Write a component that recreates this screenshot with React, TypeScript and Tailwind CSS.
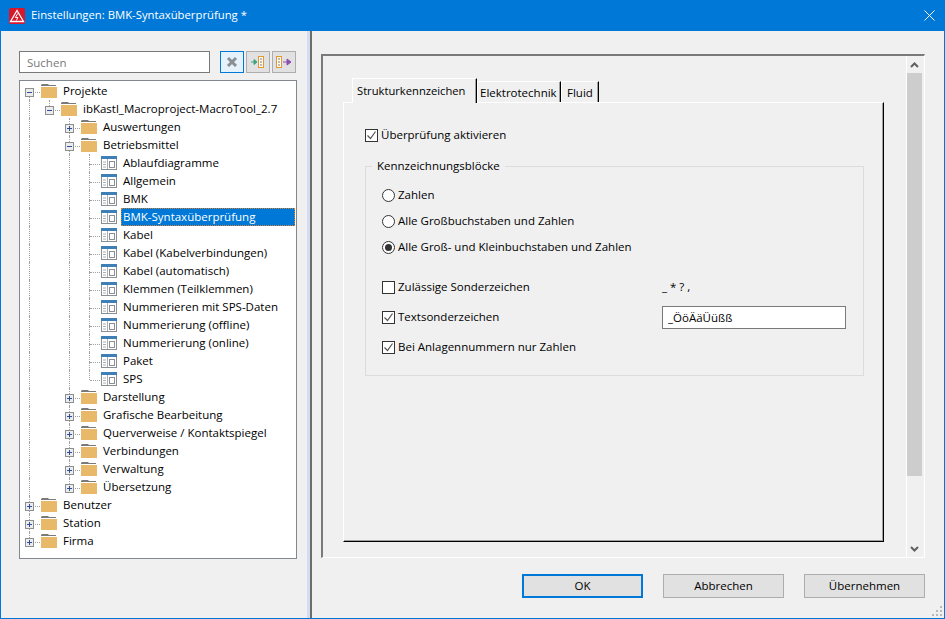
type TreeRow = { label: string; depth: number; kind: "open" | "closed" | "leaf"; selected?: boolean };

const rows: TreeRow[] = [
  { label: "Projekte", depth: 0, kind: "open" },
  { label: "ibKastl_Macroproject-MacroTool_2.7", depth: 1, kind: "open" },
  { label: "Auswertungen", depth: 2, kind: "closed" },
  { label: "Betriebsmittel", depth: 2, kind: "open" },
  { label: "Ablaufdiagramme", depth: 3, kind: "leaf" },
  { label: "Allgemein", depth: 3, kind: "leaf" },
  { label: "BMK", depth: 3, kind: "leaf" },
  { label: "BMK-Syntaxüberprüfung", depth: 3, kind: "leaf", selected: true },
  { label: "Kabel", depth: 3, kind: "leaf" },
  { label: "Kabel (Kabelverbindungen)", depth: 3, kind: "leaf" },
  { label: "Kabel (automatisch)", depth: 3, kind: "leaf" },
  { label: "Klemmen (Teilklemmen)", depth: 3, kind: "leaf" },
  { label: "Nummerieren mit SPS-Daten", depth: 3, kind: "leaf" },
  { label: "Nummerierung (offline)", depth: 3, kind: "leaf" },
  { label: "Nummerierung (online)", depth: 3, kind: "leaf" },
  { label: "Paket", depth: 3, kind: "leaf" },
  { label: "SPS", depth: 3, kind: "leaf" },
  { label: "Darstellung", depth: 2, kind: "closed" },
  { label: "Grafische Bearbeitung", depth: 2, kind: "closed" },
  { label: "Querverweise / Kontaktspiegel", depth: 2, kind: "closed" },
  { label: "Verbindungen", depth: 2, kind: "closed" },
  { label: "Verwaltung", depth: 2, kind: "closed" },
  { label: "Übersetzung", depth: 2, kind: "closed" },
  { label: "Benutzer", depth: 0, kind: "closed" },
  { label: "Station", depth: 0, kind: "closed" },
  { label: "Firma", depth: 0, kind: "closed" },
];

// does the column at `col` carry on below row `idx`?
function continues(idx: number, col: number) {
  for (let i = idx + 1; i < rows.length; i++) {
    if (rows[i].depth === col) return true;
    if (rows[i].depth < col) return false;
  }
  return false;
}

function FolderIcon() {
  return (
    <svg width="16" height="16" viewBox="0 0 16 16" className="block shrink-0">
      <path d="M1 1h6l1 1h7v1H0V2z" fill="#7a7a7a" />
      <path d="M0 4h16v11H0z" fill="#e9b96a" />
    </svg>
  );
}

function TableIcon() {
  return (
    <svg width="16" height="16" viewBox="0 0 16 16" className="block shrink-0">
      <rect x="0.5" y="3.5" width="15" height="11" fill="#fff" stroke="#8a8f94" />
      <rect x="0" y="1" width="16" height="3" fill="#3f7fb8" />
      <path d="M6.5 4v10" stroke="#a8aeb4" />
      <rect x="8.5" y="6.5" width="5" height="6" fill="#fff" stroke="#8a8f94" />
      <path d="M2 7h3M2 9.5h3M2 12h3" stroke="#a8aeb4" />
    </svg>
  );
}

function Expander({ open }: { open: boolean }) {
  return (
    <span className="absolute left-[5px] top-[6px] flex h-[9px] w-[9px] items-center justify-center border border-[#8e8f8f] bg-[#ececec]">
      <svg width="7" height="7" viewBox="0 0 7 7">
        <path d="M1 3.5h5" stroke="#2f4d9a" />
        {!open && <path d="M3.5 1v5" stroke="#2f4d9a" />}
      </svg>
    </span>
  );
}

function Row({ row, idx }: { row: TreeRow; idx: number }) {
  const cols = [];
  for (let c = 0; c <= row.depth; c++) {
    const own = c === row.depth;
    cols.push(
      <span key={c} className="relative h-[18px] w-5 shrink-0">
        {own ? (
          <>
            {idx > 0 && <i className="absolute left-[9px] top-0 h-[10px] border-l border-dotted border-[#a0a0a0]" />}
            {continues(idx, c) && <i className="absolute left-[9px] top-[10px] h-2 border-l border-dotted border-[#a0a0a0]" />}
            <i className="absolute left-[10px] top-[10px] w-[10px] border-t border-dotted border-[#a0a0a0]" />
            {row.kind !== "leaf" && <Expander open={row.kind === "open"} />}
          </>
        ) : (
          continues(idx, c) && <i className="absolute left-[9px] top-0 h-[18px] border-l border-dotted border-[#a0a0a0]" />
        )}
      </span>,
    );
  }
  return (
    <div className="flex h-[18px] items-center">
      {cols}
      <span className="ml-px">{row.kind === "leaf" ? <TableIcon /> : <FolderIcon />}</span>
      <span
        className={
          row.selected
            ? "ml-1 mr-px flex h-[18px] flex-1 items-center border border-dotted border-[#d9822b] bg-[#0078d7] px-px text-white"
            : "ml-[6px] whitespace-nowrap"
        }
      >
        {row.label}
      </span>
    </div>
  );
}

function ToolButton({ active, children }: { active?: boolean; children: React.ReactNode }) {
  return (
    <button
      type="button"
      className={
        active
          ? "flex h-[22px] w-6 items-center justify-center border border-[#0078d7] bg-[#e5f1fb]"
          : "flex h-[22px] w-6 items-center justify-center border border-[#adadad] bg-[#e1e1e1]"
      }
    >
      {children}
    </button>
  );
}

function Check({ checked, label }: { checked?: boolean; label: string }) {
  return (
    <label className="flex h-[18px] items-center gap-[3px]">
      <span className="flex h-[13px] w-[13px] items-center justify-center border border-[#333] bg-white">
        {checked && (
          <svg width="11" height="11" viewBox="0 0 11 11">
            <path d="M1.5 5.5l3 3 5-7" fill="none" stroke="#555" strokeWidth="1.2" />
          </svg>
        )}
      </span>
      {label}
    </label>
  );
}

function Radio({ checked, label }: { checked?: boolean; label: string }) {
  return (
    <label className="flex h-[18px] items-center gap-[3px]">
      <span className="flex h-[13px] w-[13px] items-center justify-center rounded-full border border-[#333] bg-white">
        {checked && <span className="h-[7px] w-[7px] rounded-full bg-[#333]" />}
      </span>
      {label}
    </label>
  );
}

function DialogButton({ label, primary }: { label: string; primary?: boolean }) {
  return (
    <button
      type="button"
      className={
        primary
          ? "h-6 w-[121px] border-2 border-[#0078d7] bg-[#e1e1e1]"
          : "h-6 w-[121px] border border-[#adadad] bg-[#e1e1e1]"
      }
    >
      {label}
    </button>
  );
}

export default function App() {
  return (
    <div className="flex h-[619px] w-[945px] flex-col overflow-hidden border border-t-0 border-[#0078d7] bg-[#f0f0f0] font-['Open_Sans','Noto_Sans',sans-serif] text-[11.5px] text-black">
      <div className="flex h-[31px] shrink-0 items-center bg-[#0078d7] pl-2 text-white">
        <svg width="16" height="16" viewBox="0 0 16 16">
          <rect width="16" height="16" rx="1.5" fill="#d8172b" />
          <path d="M8 2.5L14.5 13.5H1.5z" fill="none" stroke="#fff" strokeWidth="1.3" />
          <path d="M8.8 5.5L6.3 9.5h2.6L7.3 12.5" fill="none" stroke="#fff" />
        </svg>
        <span className="ml-[6px] text-[11.3px]">Einstellungen: BMK-Syntaxüberprüfung *</span>
        <svg width="11" height="11" viewBox="0 0 11 11" className="ml-auto mr-[9px]">
          <path d="M0.5 0.5l10 10M10.5 0.5l-10 10" stroke="#fff" />
        </svg>
      </div>
      <div className="flex min-h-0 flex-1">
        <div className="flex w-[306px] shrink-0 flex-col pl-[18px] pt-5">
          <div className="flex h-[22px] items-center">
            <input
              readOnly
              placeholder="Suchen"
              className="h-[22px] w-[191px] border border-[#7a7a7a] bg-white px-[7px] outline-none placeholder:text-[#777]"
            />
            <div className="ml-[10px] flex gap-[2px]">
              <ToolButton active>
                <svg width="12" height="12" viewBox="0 0 12 12">
                  <path d="M2 2l8 8M10 2l-8 8" stroke="#8a8f94" strokeWidth="3" />
                </svg>
              </ToolButton>
              <ToolButton>
                <svg width="14" height="12" viewBox="0 0 14 12">
                  <path d="M0 6h4M3 3.5L6 6 3 8.5z" stroke="#3fa37c" fill="#3fa37c" />
                  <rect x="7.5" y="0.5" width="5" height="11" fill="#fff" stroke="#e8952b" />
                  <path d="M9 3h2M9 6h2M9 9h2" stroke="#777" />
                </svg>
              </ToolButton>
              <ToolButton>
                <svg width="16" height="12" viewBox="0 0 16 12">
                  <rect x="0.5" y="0.5" width="5" height="11" fill="#fff" stroke="#e8952b" />
                  <path d="M2 3h2M2 6h2M2 9h2" stroke="#777" />
                  <path d="M7 6h5M11 3L15 6l-4 3z" stroke="#8a4fb0" fill="#8a4fb0" />
                </svg>
              </ToolButton>
            </div>
          </div>
          <div className="mt-[7px] h-[479px] w-[278px] border border-[#828790] bg-white pt-px">
            {rows.map((row, i) => (
              <Row key={row.label} row={row} idx={i} />
            ))}
          </div>
        </div>
        <div className="w-[3px] shrink-0 bg-[#d4dcf0]" />
        <div className="w-[2px] shrink-0 bg-[#6d6d6d]" />
        <div className="flex min-w-0 flex-1 flex-col pl-[9px] pt-[23px]">
          <div className="flex h-[504px] w-[604px] border border-t-2 border-l-2 border-t-[#7a7a7a] border-l-[#7a7a7a] border-r-white border-b-white">
            <div className="min-w-0 flex-1 pl-5 pt-[22px]">
              <div className="flex items-end pl-[9px]">
                <div className="relative z-10 -mb-px flex h-[25px] w-[125px] items-center border-t border-r border-l border-t-white border-l-white border-r-black bg-[#f0f0f0] pl-1 text-[11.2px] shadow-[inset_-1px_0_0_#a0a0a0]">
                  Strukturkennzeichen
                </div>
                <div className="flex h-[21px] w-[84px] items-center border-t border-r border-l border-t-white border-l-white border-r-black pl-[2px] pt-px shadow-[inset_-1px_0_0_#a0a0a0]">
                  Elektrotechnik
                </div>
                <div className="flex h-[21px] w-[38px] items-center border-t border-r border-l border-t-white border-l-white border-r-black pl-[5px] pt-px shadow-[inset_-1px_0_0_#a0a0a0]">
                  Fluid
                </div>
              </div>
              <div className="flex h-[440px] w-[541px] flex-col border border-t-white border-l-white border-r-black border-b-black pl-[21px] pt-[23px] shadow-[inset_-1px_-1px_0_#a0a0a0]">
                <Check checked label="Überprüfung aktivieren" />
                <fieldset className="mt-[14px] h-[218px] w-[499px] border border-[#dcdcdc] pl-4">
                  <legend className="ml-[-10px] px-[5px] leading-[16px]">Kennzeichnungsblöcke</legend>
                  <div className="mt-3 flex flex-col gap-2">
                    <Radio label="Zahlen" />
                    <Radio label="Alle Großbuchstaben und Zahlen" />
                    <Radio checked label="Alle Groß- und Kleinbuchstaben und Zahlen" />
                  </div>
                  <div className="mt-[22px] grid auto-rows-[18px] grid-cols-[280px_184px] items-center gap-y-3">
                    <Check label="Zulässige Sonderzeichen" />
                    <span>_ * ? ,</span>
                    <Check checked label="Textsonderzeichen" />
                    <input
                      readOnly
                      value="_ÖöÄäÜüßß"
                      className="h-[23px] border border-[#7a7a7a] bg-white px-[5px] outline-none"
                    />
                    <Check checked label="Bei Anlagennummern nur Zahlen" />
                  </div>
                </fieldset>
              </div>
            </div>
            <div className="flex w-[18px] shrink-0 flex-col border-l border-white">
              <span className="flex h-[17px] w-[15px] items-center justify-center">
                <svg width="9" height="6" viewBox="0 0 9 6">
                  <path d="M1 5l3.5-3.5L8 5" fill="none" stroke="#606060" strokeWidth="2" />
                </svg>
              </span>
              <div className="h-[403px] w-[15px] bg-[#cdcdcd]" />
              <span className="mt-auto flex h-[17px] w-[15px] items-center justify-center">
                <svg width="9" height="6" viewBox="0 0 9 6">
                  <path d="M1 1l3.5 3.5L8 1" fill="none" stroke="#606060" strokeWidth="2" />
                </svg>
              </span>
            </div>
          </div>
          <div className="mt-4 flex justify-end gap-5 pr-[19px]">
            <DialogButton label="OK" primary />
            <DialogButton label="Abbrechen" />
            <DialogButton label="Übernehmen" />
          </div>
          <div className="relative flex-1">
            <svg width="12" height="12" viewBox="0 0 12 12" className="absolute bottom-px right-px">
              <path d="M9 1h2v2H9zM5 5h2v2H5zM9 5h2v2H9zM1 9h2v2H1zM5 9h2v2H5zM9 9h2v2H9z" fill="#b8b8b8" />
            </svg>
          </div>
        </div>
      </div>
    </div>
  );
}
